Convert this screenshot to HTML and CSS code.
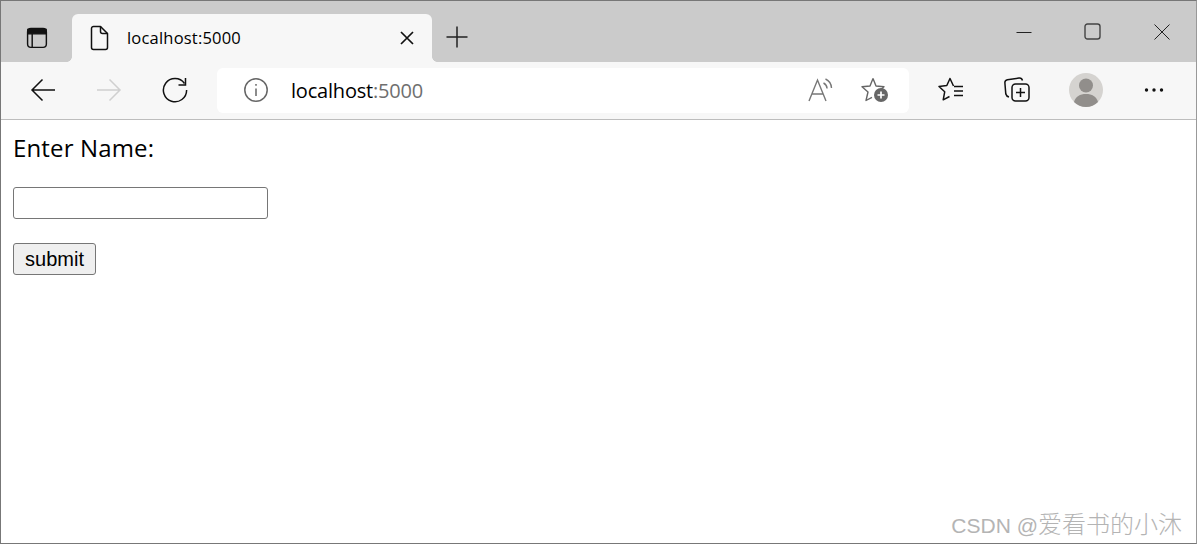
FILE: index.html
```html
<!DOCTYPE html>
<html lang="en">
<head>
<meta charset="utf-8">
<title>localhost:5000</title>
<link rel="stylesheet" href="styles.css">
</head>
<body>
<div class="window">
  <header class="titlebar">
    <div class="tab-actions">
      <svg class="icon" width="24" height="24" viewBox="0 0 24 24" fill="none" stroke="#111" stroke-width="1.5"><rect x="2.7" y="2.7" width="19.6" height="19.6" rx="3.5"/><path d="M3 3.500h19v4.700H3z" fill="#111"/><path d="M7.500 8v14"/></svg>
    </div>
    <div class="tab">
      <svg class="icon tab-file" width="20" height="26" viewBox="0 0 20 26" fill="none" stroke="#111" stroke-width="1.5" stroke-linejoin="round"><path d="M4.500 1.500h7l7 7v14a2 2 0 0 1-2 2h-12a2 2 0 0 1-2-2v-19a2 2 0 0 1 2-2z"/><path d="M11.500 1.500v5a2 2 0 0 0 2 2h5"/></svg>
      <span class="tab-title">localhost:5000</span>
      <svg class="icon tab-close" width="14" height="14" viewBox="0 0 14 14" stroke="#111" stroke-width="1.7"><path d="M1 1l12 12M13 1L1 13"/></svg>
    </div>
    <svg class="icon new-tab" width="24" height="24" viewBox="0 0 24 24" stroke="#222" stroke-width="1.5"><path d="M12 1.500v21M1.500 12h21"/></svg>
    <div class="window-controls">
      <svg class="icon" width="16" height="16" viewBox="0 0 16 16" stroke="#222" stroke-width="1"><path d="M0.500 8.500h15"/></svg>
      <svg class="icon" width="17" height="17" viewBox="0 0 17 17" fill="none" stroke="#444" stroke-width="1.4"><rect x="1" y="1" width="15" height="15" rx="2.500"/></svg>
      <svg class="icon" width="16" height="16" viewBox="0 0 16 16" stroke="#222" stroke-width="1"><path d="M.5.5l15 15M15.500.5l-15 15"/></svg>
    </div>
  </header>
  <nav class="toolbar">
    <div class="nav-buttons">
      <svg class="icon" width="26" height="24" viewBox="0 0 26 24" fill="none" stroke="#111" stroke-width="1.5"><path d="M25 12H2M12.500 1.500L2 12l10.500 10.500"/></svg>
      <svg class="icon" width="26" height="24" viewBox="0 0 26 24" fill="none" stroke="#d0d0d0" stroke-width="1.5"><path d="M1 12h23M13.500 1.500L24 12 13.500 22.500"/></svg>
      <svg class="icon" width="26" height="26" viewBox="0 0 26 26" fill="none" stroke="#111" stroke-width="1.5"><path d="M22.500 6.500A11.600 11.600 0 1 0 24.600 13"/><path d="M23.500 1v7h-7"/></svg>
    </div>
    <div class="address">
      <svg class="icon" width="26" height="26" viewBox="0 0 26 26" fill="none" stroke="#666" stroke-width="1.5"><circle cx="13" cy="13" r="11.200"/><path d="M13 11.500v7.500"/><path d="M13 7v1.800"/></svg>
      <span class="url">localhost<span class="url-port">:5000</span></span>
      <svg class="icon read-aloud" width="26" height="26" viewBox="0 0 26 26" fill="none" stroke="#777" stroke-width="1.4"><path d="M1 24L9.500 3l8.500 21M4 17h11.500"/><path d="M15.500 6c2 1 3.400 3 3.600 5.500M17.500 2c3.500 1.600 5.800 5 6 9"/></svg>
      <svg class="icon fav-add" width="28" height="26" viewBox="0 0 28 26" fill="none" stroke="#666" stroke-width="1.4" stroke-linejoin="round"><path d="M12 1.500l3 7.500 8 .7-5.800 5.200"/><path d="M12 1.500L9 9l-8 .7 6 5.300-2 8.500 6-3.200"/><circle cx="20" cy="18" r="7" fill="#666" stroke="none"/><path d="M20 14.500v7M16.500 18h7" stroke="#fff" stroke-width="1.700"/></svg>
    </div>
    <div class="toolbar-actions">
      <svg class="icon" width="26" height="26" viewBox="0 0 26 26" fill="none" stroke="#111" stroke-width="1.5" stroke-linejoin="round"><path d="M15.500 9L12 1.500 8.800 8.500l-7.800 1 5.700 5.300-1.500 8 6.300-3.300"/><path d="M16 9.500h9M16 14h9M16 18.500h9"/></svg>
      <svg class="icon" width="26" height="26" viewBox="0 0 26 26" fill="none" stroke="#111" stroke-width="1.5"><path d="M5 20c-2-.5-2.800-1.500-3.200-3L.9 6c-.2-1.800.8-3 2.500-3.300L15 1c1.800-.2 3 .5 3.500 2.500"/><rect x="8" y="7" width="17" height="17" rx="3.500"/><path d="M16.500 11v9M12 15.500h9"/></svg>
      <div class="avatar">
        <svg width="34" height="34" viewBox="0 0 34 34"><circle cx="17" cy="17" r="17" fill="#d5d3d0"/><circle cx="17" cy="12.500" r="7" fill="#918e8b"/><path d="M5 29c1.500-5.500 6-8 12-8s10.500 2.500 12 8a17 17 0 0 1-24 0z" fill="#918e8b"/></svg>
      </div>
      <svg class="icon" width="20" height="6" viewBox="0 0 20 6" fill="#111"><circle cx="2.500" cy="3" r="1.700"/><circle cx="10" cy="3" r="1.700"/><circle cx="17.500" cy="3" r="1.700"/></svg>
    </div>
  </nav>
  <main class="page">
    <form class="name-form" onsubmit="return false">
      <label class="name-label" for="name">Enter Name:</label>
      <input class="name-input" id="name" type="text">
      <button class="submit" type="submit">submit</button>
    </form>
  </main>
  <div class="watermark"><span class="watermark-latin">CSDN @</span>爱看书的小沐</div>
</div>
</body>
</html>
```
FILE: styles.css
```css
* { box-sizing: border-box; }
html, body { margin: 0; height: 100%; overflow: hidden; background: #fff; }
.window {
  position: relative;
  display: flex;
  flex-direction: column;
  width: 1197px;
  height: 544px;
  border: 1px solid #777;
  border-right-color: #999;
  font-family: "Open Sans", "Noto Sans", sans-serif;
  color: #000;
}
.icon { display: block; flex: none; }
.titlebar {
  display: flex;
  align-items: flex-start;
  flex: none;
  height: 61px;
  background: #cbcbcb;
}
.tab-actions { width: 71px; padding: 25px 0 0 24px; }
.tab-actions .icon { width: 23px; height: 23px; }
.tab {
  position: relative;
  display: flex;
  align-items: center;
  width: 360px;
  height: 48px;
  margin-top: 13px;
  padding: 0 18px 0 17px;
  background: #f7f7f7;
  border-radius: 6px 6px 0 0;
}
.tab::before,
.tab::after {
  content: "";
  position: absolute;
  bottom: 0;
  width: 5px;
  height: 5px;
}
.tab::before {
  left: -5px;
  background: radial-gradient(circle at 0 0, #cbcbcb 4.500px, #f7f7f7 5px);
}
.tab::after {
  right: -5px;
  background: radial-gradient(circle at 100% 0, #cbcbcb 4.500px, #f7f7f7 5px);
}
.tab-title { margin: 0 0 2px 18px; font-size: 16.500px; letter-spacing: 0.2px; flex: 1; }
.new-tab { margin: 24px 0 0 13px; }
.window-controls {
  display: flex;
  align-items: center;
  gap: 53px;
  margin: 22px 0 0 auto;
  padding-right: 26px;
}
.window-controls .icon:first-child { margin-right: -1px; margin-left: 1px; }
.toolbar {
  display: flex;
  align-items: center;
  flex: none;
  height: 58px;
  background: #f7f7f7;
  border-bottom: 1px solid #bdbdbd;
  padding-bottom: 1px;
}
.nav-buttons { display: flex; align-items: center; gap: 40px; width: 216px; padding-left: 29px; }
.address {
  display: flex;
  align-items: center;
  width: 692px;
  height: 45px;
  padding-left: 26px;
  background: #fff;
  border-radius: 6px;
}
.url { margin-left: 22px; font-size: 20px; letter-spacing: -0.2px; flex: 1; }
.url-port { color: #6f6f6f; }
.read-aloud { margin-right: 27px; }
.fav-add { margin-right: 20px; }
.toolbar-actions { display: flex; align-items: center; padding-left: 29px; gap: 40px; }
.avatar { width: 34px; height: 34px; margin-left: -1px; margin-right: 1px; }
.avatar svg { display: block; }
.page { flex: 1; padding: 11px 12px 12px; }
.name-form { display: flex; flex-direction: column; align-items: flex-start; }
.name-label { font-size: 24px; line-height: 33px; letter-spacing: 0.15px; }
.name-input {
  width: 255px;
  height: 32px;
  margin-top: 23px;
  border: 1px solid #767676;
  border-radius: 3px;
  background: #fff;
}
.submit {
  width: 83px;
  height: 32px;
  margin-top: 24px;
  padding: 0;
  font-family: "Liberation Sans", Arial, sans-serif;
  font-size: 20px;
  color: #000;
  background: #efefef;
  border: 1px solid #767676;
  border-radius: 3px;
}
.watermark {
  position: absolute;
  right: 14px;
  bottom: 3px;
  font-family: "Liberation Sans", "Noto Sans CJK SC", sans-serif;
  font-size: 24px;
  font-weight: 300;
  color: #b4b4b4;
}
.watermark-latin { font-size: 21px; }
```
